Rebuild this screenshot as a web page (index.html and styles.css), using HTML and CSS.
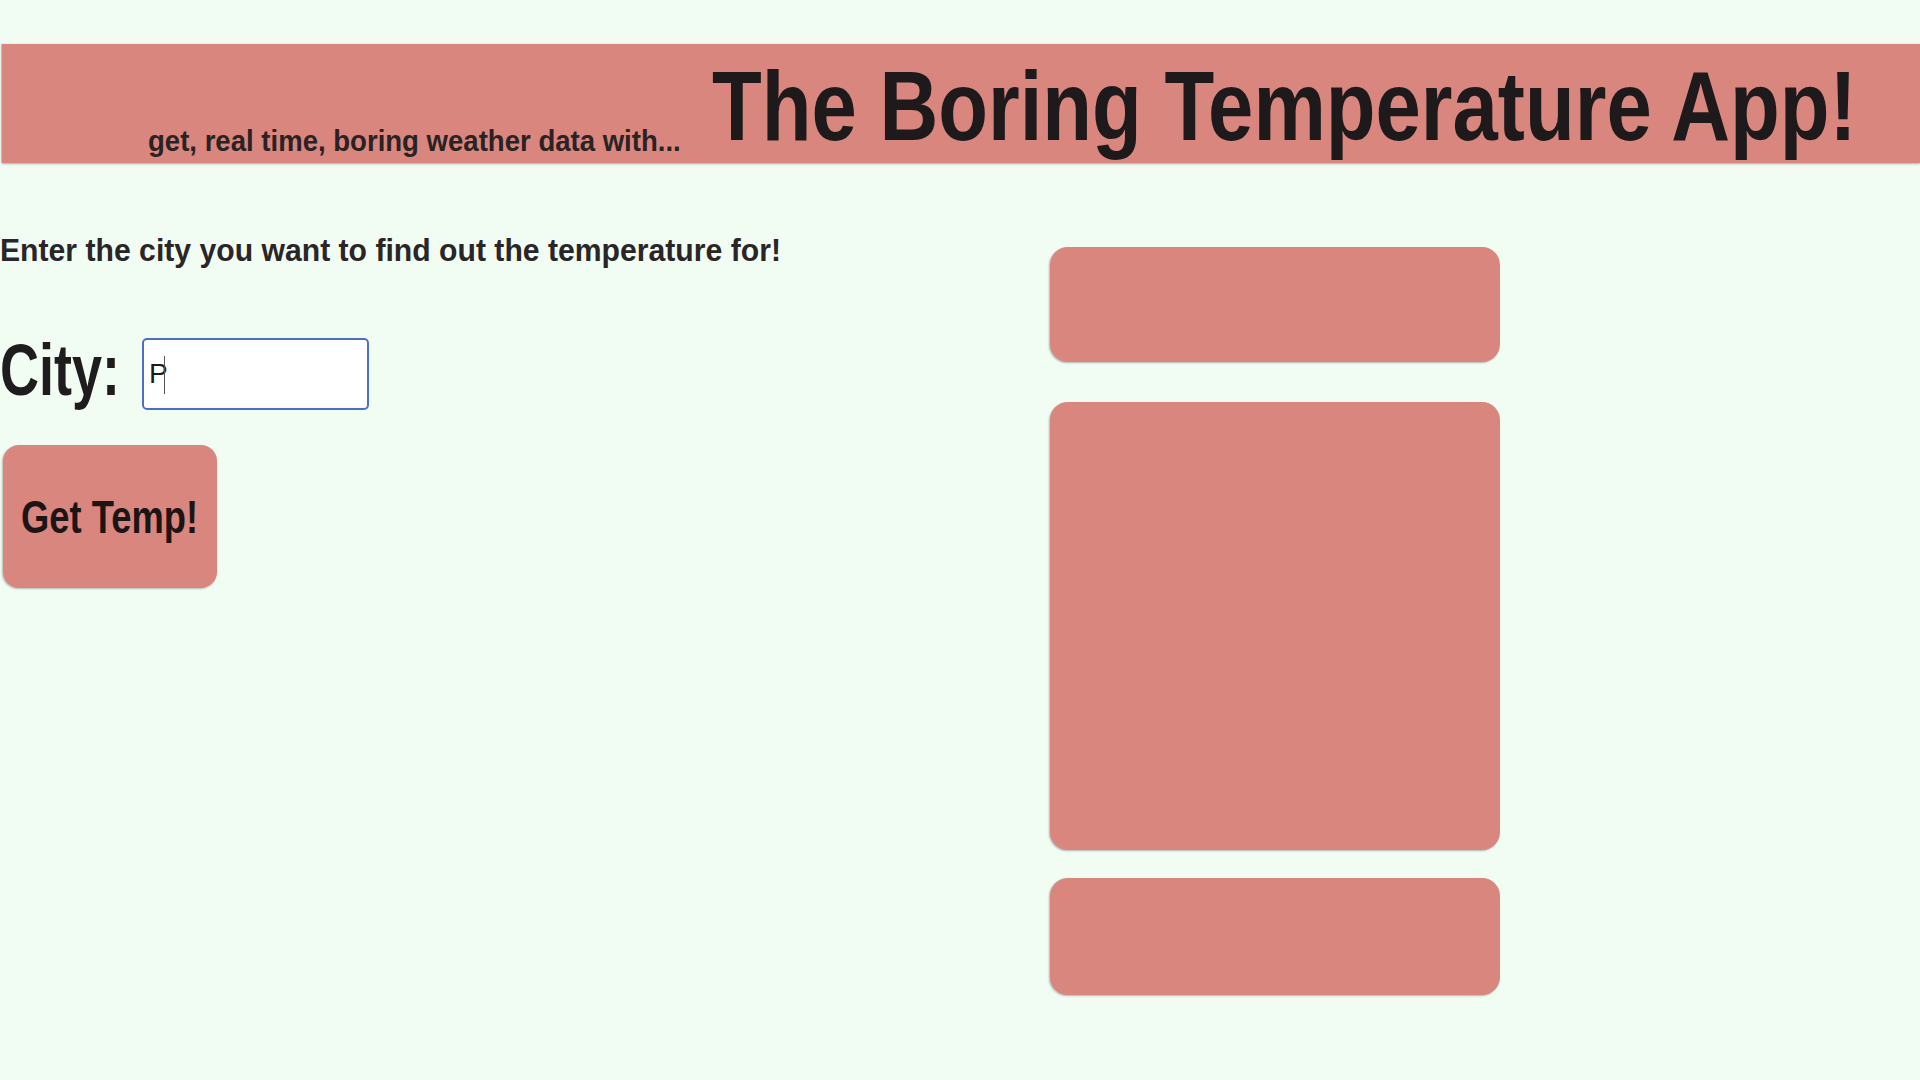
FILE: index.html
```html
<!DOCTYPE html>
<html lang="en">
<head>
<meta charset="utf-8">
<title>The Boring Temperature App!</title>
<link rel="stylesheet" href="styles.css">
</head>
<body>
<header class="banner">
  <span class="tagline"><span class="squeeze tagline-text">get, real time, boring weather data with...</span></span>
  <h1 class="title"><span class="squeeze title-text">The Boring Temperature App!</span></h1>
</header>
<main class="layout">
  <section class="form-col">
    <p class="prompt"><span class="squeeze prompt-text">Enter the city you want to find out the temperature for!</span></p>
    <div class="city-row">
      <label class="city-label" for="city"><span class="squeeze city-text">City:</span></label>
      <div class="field">
        <input class="city-input" id="city" type="text" value="P">
        <span class="caret"></span>
      </div>
    </div>
    <button class="get-btn" type="button"><span class="squeeze btn-text">Get Temp!</span></button>
  </section>
  <section class="result-col">
    <div class="card card-top"></div>
    <div class="card card-mid"></div>
    <div class="card card-bottom"></div>
  </section>
</main>
</body>
</html>
```
FILE: styles.css
```css
html, body {
  margin: 0;
  padding: 0;
}
body {
  background: #f1fcf3;
  color: #1f1c1d;
  font-family: "Liberation Sans", Arial, sans-serif;
  font-weight: bold;
  width: 1920px;
  height: 1080px;
  overflow: hidden;
}
.squeeze {
  display: inline-block;
  white-space: nowrap;
  transform-origin: left top;
}
.banner {
  margin: 44px 0 0 2px;
  height: 119px;
  background: #d9867f;
  box-shadow: 0 1px 2px rgba(0, 0, 0, 0.28), -1px 0 1px rgba(0, 0, 0, 0.15);
  display: flex;
  align-items: flex-start;
  overflow: hidden;
}
.tagline {
  display: block;
  margin: 83px 0 0 146px;
  width: 533px;
  font-size: 29px;
  line-height: 29px;
  color: #2a2223;
}
.tagline-text {
  transform: scaleX(0.95);
}
.title {
  margin: 13px 0 0 31px;
  font-size: 98px;
  line-height: 98px;
  font-weight: bold;
  color: #1e1a1b;
}
.title-text {
  transform: scaleX(0.831);
}
.layout {
  display: grid;
  grid-template-columns: 1050px 450px;
}
.form-col {
  padding-top: 72px;
  display: flex;
  flex-direction: column;
  align-items: flex-start;
}
.prompt {
  margin: 0;
  width: 781px;
  font-size: 31px;
  line-height: 31px;
  color: #2a2526;
}
.prompt-text {
  transform: scaleX(0.973);
}
.city-row {
  margin-top: 68px;
  display: flex;
  align-items: flex-start;
}
.city-label {
  display: block;
  width: 142px;
  font-size: 72px;
  line-height: 72px;
  color: #1f1c1d;
}
.city-text {
  transform: scaleX(0.75);
}
.field {
  position: relative;
  margin-top: 4px;
}
.city-input {
  display: block;
  box-sizing: border-box;
  width: 227px;
  height: 72px;
  margin: 0;
  padding: 0 0 0 5px;
  border: 2px solid #4b70c3;
  border-radius: 5px;
  background: #ffffff;
  font-family: "Liberation Sans", sans-serif;
  font-weight: normal;
  font-size: 28px;
  color: #1a1a1a;
  outline: none;
}
.caret {
  position: absolute;
  left: 22px;
  top: 18px;
  width: 1px;
  height: 38px;
  background: #555;
}
.get-btn {
  margin: 35px 0 0 3px;
  width: 214px;
  height: 143px;
  padding: 0 0 0 18px;
  border: none;
  border-radius: 16px;
  background: #d9867f;
  box-shadow: -1px 1px 2px rgba(0, 0, 0, 0.25);
  font-family: "Liberation Sans", Arial, sans-serif;
  font-weight: bold;
  font-size: 46px;
  line-height: 46px;
  color: #1c1516;
  display: flex;
  align-items: center;
  justify-content: flex-start;
  box-sizing: border-box;
}
.btn-text {
  transform: scaleX(0.79);
  transform-origin: left center;
}
.result-col {
  padding-top: 84px;
  display: flex;
  flex-direction: column;
}
.card {
  background: #d9867f;
  border-radius: 18px;
  box-shadow: -1px 1px 2px rgba(0, 0, 0, 0.28);
}
.card-top {
  height: 115px;
}
.card-mid {
  margin-top: 40px;
  height: 448px;
}
.card-bottom {
  margin-top: 28px;
  height: 117px;
}
```
